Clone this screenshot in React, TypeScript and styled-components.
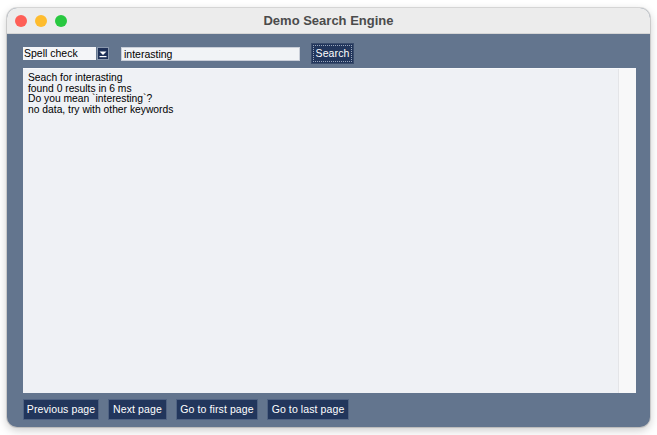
import React from "react";
import styled, { createGlobalStyle } from "styled-components";

const Global = createGlobalStyle`
  html, body { margin: 0; padding: 0; background: #ffffff; }
  body { font-family: "Liberation Sans", Arial, sans-serif; }
`;

const Page = styled.div`
  width: 657px;
  height: 435px;
  padding: 8px 7px 8px 7px;
  box-sizing: border-box;
`;

const Window = styled.div`
  width: 643px;
  height: 419px;
  border-radius: 10px;
  overflow: hidden;
  display: flex;
  flex-direction: column;
  background: #63758e;
  box-shadow: 0 0 0 1px rgba(0,0,0,0.12), 0 3px 10px rgba(0,0,0,0.22);
`;

const TitleBar = styled.div`
  height: 25px;
  flex: none;
  background: #ececec;
  border-bottom: 1px solid #d6d6d6;
  display: flex;
  align-items: center;
  position: relative;
`;

const Lights = styled.div`
  display: flex;
  gap: 8px;
  padding-left: 8px;
`;

const Light = styled.span<{ $c: string }>`
  width: 12px;
  height: 12px;
  border-radius: 50%;
  background: ${(p) => p.$c};
`;

const Title = styled.div`
  position: absolute;
  left: 0;
  right: 0;
  text-align: center;
  font-size: 13px;
  font-weight: bold;
  color: #4b4b4b;
  pointer-events: none;
`;

const Body = styled.div`
  flex: 1;
  display: flex;
  flex-direction: column;
  padding: 9px 14px 7px 16px;
  min-height: 0;
`;

const Toolbar = styled.div`
  display: flex;
  align-items: center;
  height: 21px;
  margin-bottom: 4px;
`;

const Select = styled.div`
  display: flex;
  align-items: stretch;
  height: 13px;
  margin-right: 12px;
`;

const SelectValue = styled.div`
  width: 73px;
  background: #f4f5f8;
  font-size: 10.5px;
  line-height: 13px;
  padding-left: 1px;
  color: #000;
  box-sizing: border-box;
`;

const SelectArrow = styled.div`
  width: 12px;
  margin-left: 1px;
  background: #1f3158;
  border: 1px solid #8a98ad;
  box-sizing: border-box;
  display: flex;
  align-items: center;
  justify-content: center;
`;

const Input = styled.div`
  width: 179px;
  height: 14px;
  background: #f1f3f6;
  border: 1px solid #c9ced8;
  box-sizing: border-box;
  font-size: 10.5px;
  line-height: 12px;
  padding-left: 2px;
  color: #000;
  margin-right: 11px;
`;

const Button = styled.div<{ $w: number }>`
  width: ${(p) => p.$w}px;
  height: 21px;
  box-sizing: border-box;
  background: #22365c;
  border: 1px solid #4f6282;
  color: #ffffff;
  font-size: 10.5px;
  line-height: 19px;
  text-align: center;
  white-space: nowrap;
  letter-spacing: 0.1px;
`;

const SearchButton = styled(Button)`
  outline: 1px dotted #9aa7bb;
  outline-offset: -3px;
  border-color: #3a4c6c;
`;

const TextArea = styled.div`
  flex: 1;
  display: flex;
  background: #eff1f5;
  border-top: 1px solid #f8f9fb;
  margin-bottom: 6px;
  min-height: 0;
`;

const TextContent = styled.div`
  flex: 1;
  padding: 4px 5px;
  font-size: 10.3px;
  line-height: 10.7px;
  color: #000;
`;

const Line = styled.div``;

const Scrollbar = styled.div`
  width: 17px;
  background: #f8f8f9;
  border-left: 1px solid #e4e5e8;
`;

const Footer = styled.div`
  display: flex;
  gap: 9px;
  align-items: center;
`;

export default function App() {
  return (
    <>
      <Global />
      <Page>
        <Window>
          <TitleBar>
            <Lights>
              <Light $c="#fe5f57" />
              <Light $c="#febc2e" />
              <Light $c="#28c840" />
            </Lights>
            <Title>Demo Search Engine</Title>
          </TitleBar>
          <Body>
            <Toolbar>
              <Select>
                <SelectValue>Spell check</SelectValue>
                <SelectArrow>
                  <svg width="8" height="8" viewBox="0 0 8 8">
                    <polygon points="0.5,1.5 7.5,1.5 4,5" fill="#ffffff" />
                    <rect x="0.5" y="6" width="7" height="1.2" fill="#ffffff" />
                  </svg>
                </SelectArrow>
              </Select>
              <Input>interasting</Input>
              <SearchButton $w={43}>Search</SearchButton>
            </Toolbar>
            <TextArea>
              <TextContent>
                <Line>Seach for interasting</Line>
                <Line>found 0 results in 6 ms</Line>
                <Line>Do you mean `interesting`?</Line>
                <Line>no data, try with other keywords</Line>
              </TextContent>
              <Scrollbar />
            </TextArea>
            <Footer>
              <Button $w={76}>Previous page</Button>
              <Button $w={59}>Next page</Button>
              <Button $w={82}>Go to first page</Button>
              <Button $w={82}>Go to last page</Button>
            </Footer>
          </Body>
        </Window>
      </Page>
    </>
  );
}
